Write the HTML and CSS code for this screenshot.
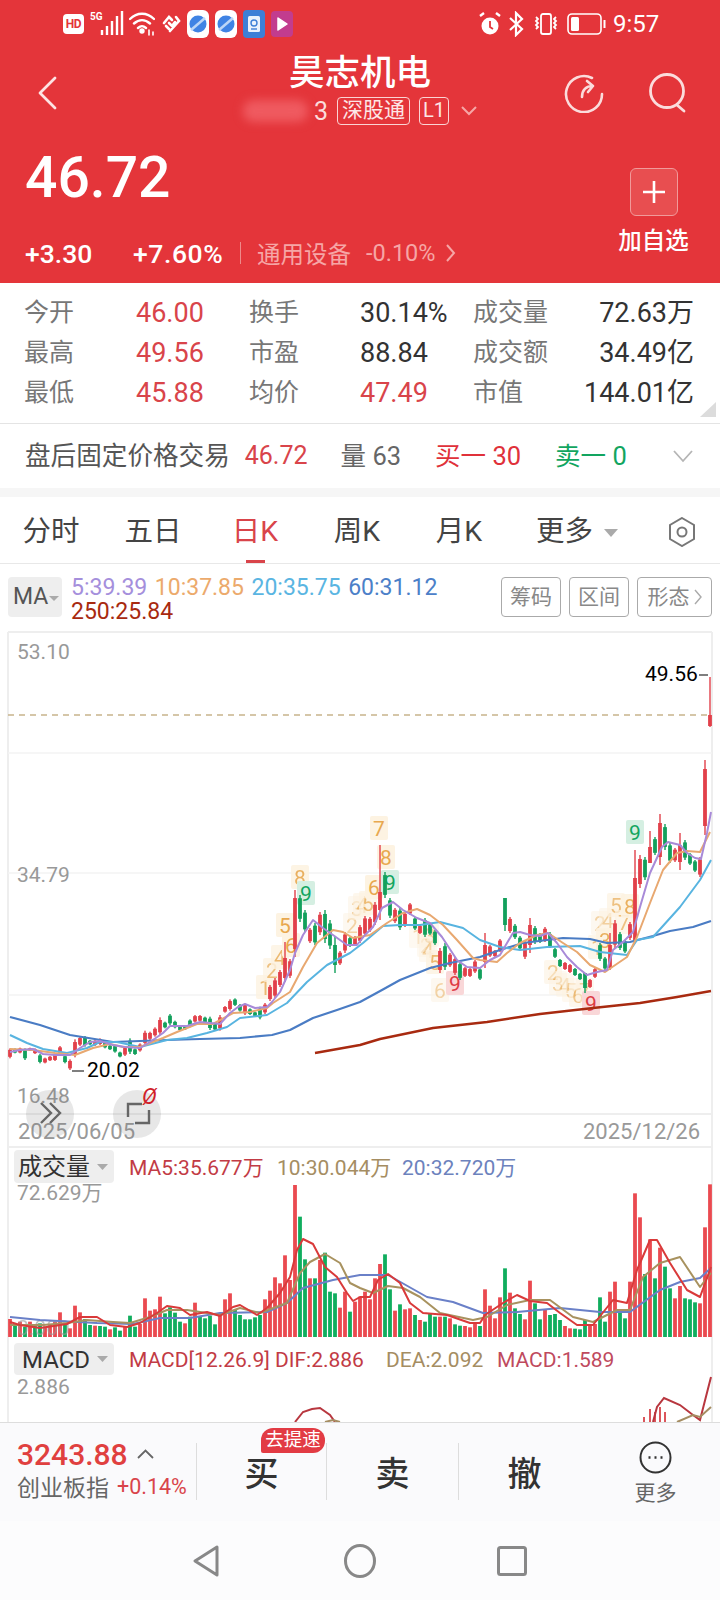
FILE: index.html
```html
<!DOCTYPE html>
<html lang="zh">
<head>
<meta charset="utf-8">
<title>昊志机电</title>
<link rel="stylesheet" href="styles.css">
</head>
<body>
<div class="phone">
  <header class="head">
    <div class="status">
      <div class="st-left">
        <span class="hd">HD</span>
        <svg class="i-signal" width="34" height="26" viewBox="0 0 34 26"><text class="g5" x="0" y="9">5G</text><path d="M13 24v-5M18 24v-9M23 24V10M28 24V5M33 24V0" transform="translate(-1 0)" stroke="#fff" stroke-width="2.4" fill="none"/></svg>
        <svg width="26" height="24" viewBox="0 0 26 24" fill="none" stroke="#fff" stroke-width="2.4" stroke-linecap="round"><path d="M1 7c7-7 17-7 24 0M5 11.500c5-4.500 11-4.500 16 0M9 16c3-2.500 5-2.500 8 0"/><circle cx="13" cy="19" r="1.500" fill="#fff"/><path d="M20 18v5M24 20v3" stroke-width="1.600"/></svg>
        <svg class="i-heart" width="20" height="20" viewBox="0 0 20 20" fill="none" stroke="#fff" stroke-width="2.600" stroke-linecap="round"><path d="M3 9l5-6 3 3M9 17L18 7 15 3M5 12l3 3M8 9l3 3 3-4"/></svg>
        <svg class="app" width="22" height="28" viewBox="0 0 22 28"><rect width="22" height="28" rx="6" fill="#fff"/><circle cx="11" cy="14" r="8.500" fill="#3f83e4"/><path d="M4 20L18 8" stroke="#bcd6f7" stroke-width="2.500"/></svg>
        <svg class="app" width="22" height="28" viewBox="0 0 22 28"><rect width="22" height="28" rx="6" fill="#fff"/><circle cx="11" cy="14" r="8.500" fill="#3f83e4"/><path d="M4 20L18 8" stroke="#bcd6f7" stroke-width="2.500"/></svg>
        <svg class="app" width="22" height="28" viewBox="0 0 22 28"><rect width="22" height="28" rx="4" fill="#3d7fd6"/><rect x="5" y="6" width="12" height="16" rx="1.500" fill="#eaf2fc"/><circle cx="11" cy="13" r="3" fill="none" stroke="#3d7fd6" stroke-width="1.400"/><path d="M8 19h6" stroke="#3d7fd6" stroke-width="1.400"/></svg>
        <svg class="app" width="22" height="26" viewBox="0 0 22 26"><rect width="22" height="26" rx="4" fill="#c23c8e"/><path d="M7 7l9 6-9 6z" fill="#fff" stroke="#fff" stroke-width="1.500" stroke-linejoin="round"/></svg>
      </div>
      <div class="st-right">
        <svg width="22" height="26" viewBox="0 0 22 26"><circle cx="11" cy="15" r="8.500" fill="#fff"/><path d="M11 10v6l3 2" stroke="#e4353a" stroke-width="1.800" fill="none"/><path d="M1 5l4-3M21 5l-4-3" stroke="#fff" stroke-width="2.400"/></svg>
        <svg width="17" height="26" viewBox="0 0 17 26" fill="none" stroke="#fff" stroke-width="2.200"><path d="M2 7l12 11-6 6V2l6 6L2 19"/></svg>
        <svg width="28" height="24" viewBox="0 0 28 24" fill="none" stroke="#fff" stroke-width="1.800"><rect x="9" y="2" width="10" height="20" rx="2"/><path d="M4 5l2 2-2 2 2 2-2 2 2 2-2 2M24 5l-2 2 2 2-2 2 2 2-2 2 2 2"/></svg>
        <svg width="39" height="24" viewBox="0 0 39 24" fill="none"><rect x="1" y="2" width="33" height="20" rx="4" stroke="#fff" stroke-width="1.600"/><rect x="4" y="5" width="8" height="14" rx="1.500" fill="#fff"/><rect x="36.500" y="8" width="2" height="8" fill="#fff"/></svg>
        <span class="clock">9:57</span>
      </div>
    </div>
    <div class="nav">
      <div class="nav-l">
        <svg width="20" height="34" viewBox="0 0 20 34" fill="none" stroke="#fde3e3" stroke-width="2.800" stroke-linecap="round" stroke-linejoin="round"><path d="M17 2L2 17l15 15"/></svg>
      </div>
      <div class="nav-c">
        <div class="name">昊志机电</div>
        <div class="sub">
          <span class="blurcode"></span>
          <span class="code3">3</span>
          <span class="tag">深股通</span>
          <span class="tag tag-l">L1</span>
          <svg width="16" height="10" viewBox="0 0 16 10" fill="none" stroke="#f6a6a6" stroke-width="2"><path d="M1 1l7 7 7-7"/></svg>
        </div>
      </div>
      <div class="nav-r">
        <svg width="40" height="40" viewBox="0 0 40 40" fill="none" stroke="#fbdcdc" stroke-width="2.600" stroke-linecap="round" stroke-linejoin="round"><path d="M28 5A18 18 0 1 0 38 21"/><path d="M18 24c0-7 4-11 11-11M23 8l6 5-5 6"/></svg>
        <svg class="i-search" width="38" height="40" viewBox="0 0 38 40" fill="none" stroke="#fbdcdc" stroke-width="2.800" stroke-linecap="round"><circle cx="18" cy="18" r="16.500"/><path d="M28 32l7 6"/></svg>
      </div>
    </div>
    <div class="quote">
      <div class="q-main">
        <div class="price">46.72</div>
        <div class="chg">
          <span class="chg-a">+3.30</span>
          <span class="chg-b">+7.60%</span>
          <span class="sep"></span>
          <span class="sector">通用设备</span>
          <span class="sector-v">-0.10%</span>
          <svg width="10" height="20" viewBox="0 0 10 20" fill="none" stroke="#f6a6a6" stroke-width="2"><path d="M1 2l7 8-7 8"/></svg>
        </div>
      </div>
      <div class="q-add">
        <div class="addbtn"><svg width="24" height="24" viewBox="0 0 24 24" stroke="#fff" stroke-width="2.600"><path d="M12 1v22M1 12h22"/></svg></div>
        <div class="addtxt">加自选</div>
      </div>
    </div>
  </header>

  <section class="stats">
    <span class="k">今开</span><span class="v red">46.00</span><span class="k">换手</span><span class="v">30.14%</span><span class="k">成交量</span><span class="v right">72.63万</span>
    <span class="k">最高</span><span class="v red">49.56</span><span class="k">市盈</span><span class="v">88.84</span><span class="k">成交额</span><span class="v right">34.49亿</span>
    <span class="k">最低</span><span class="v red">45.88</span><span class="k">均价</span><span class="v red">47.49</span><span class="k">市值</span><span class="v right">144.01亿</span>
    <span class="corner"></span>
  </section>

  <section class="after">
    <div class="af-first"><span class="af-l">盘后固定价格交易</span><span class="af-p">46.72</span></div>
    <span class="af-q">量 63</span>
    <span class="af-b">买一 30</span>
    <span class="af-s">卖一 0</span>
    <svg class="af-c" width="20" height="13" viewBox="0 0 20 13" fill="none" stroke="#b5b5b5" stroke-width="1.800"><path d="M1 1l9 10 9-10"/></svg>
  </section>
  <div class="band"></div>

  <nav class="tabs">
    <span class="tab">分时</span>
    <span class="tab">五日</span>
    <span class="tab on">日K</span>
    <span class="tab">周K</span>
    <span class="tab">月K</span>
    <span class="tab more">更多<i class="tri"></i></span>
    <svg class="hex" width="28" height="30" viewBox="0 0 28 30" fill="none" stroke="#777" stroke-width="2"><path d="M14 1l12 7v14l-12 7-12-7V8z"/><circle cx="14" cy="15" r="4.500"/></svg>
  </nav>

  <div class="mabar">
    <div class="mabox">MA<i class="tri tri-s"></i></div>
    <div class="legend">
      <span class="c5">5:39.39</span><span class="c10">10:37.85</span><span class="c20">20:35.75</span><span class="c60">60:31.12</span><span class="c250">250:25.84</span>
    </div>
    <div class="tools">
      <span class="tool">筹码</span><span class="tool">区间</span><span class="tool tool-w">形态<svg width="8" height="18" viewBox="0 0 8 18" fill="none" stroke="#aaa" stroke-width="1.400"><path d="M1 2l6 7-6 7"/></svg></span>
    </div>
  </div>

  <svg class="chart" width="720" height="794" viewBox="0 628 720 794">
    <g class="frame">
      <path d="M8 632V1422M712 632V1422"/>
      <path d="M8 632H712" class="fr-top"/>
      <path d="M8 753H712M8 873H712M8 995H712" class="grid"/>
      <path d="M8 1114H712M8 1147H712" class="fr-top"/>
    </g>
    <path class="dash" d="M8 715H712"/>
    <text class="ax" x="17" y="659">53.10</text>
    <text class="ax" x="17" y="882">34.79</text>
    <text class="ax" x="17" y="1103">16.48</text>
    <text class="ax ax-d" x="18" y="1139">2025/06/05</text>
    <text class="ax ax-d" x="583" y="1139">2025/12/26</text>
    <g id="td"></g>
    <g id="candles"></g>
    <polyline class="ln l60" points="10,1017 40,1025 70,1035 113,1042 140,1041 167,1040 200,1039 240,1038 272,1035 290,1030 313,1018 337,1010 360,1002 382,990 400,980 430,968 450,963 480,957 500,950 523,943 547,940 563,938 590,939 607,943 630,942 653,936 670,931 693,927 711,921"/>
    <polyline class="ln l250" points="315,1053 360,1045 380,1039 433,1028 487,1022 540,1014 593,1008 640,1003 677,997 711,991"/>
    <polyline class="ln l20" points="10,1035 27,1043 43,1049 67,1053 87,1048 100,1042 117,1042 140,1047 167,1040 187,1038 207,1033 227,1027 240,1018 267,1015 287,1003 307,982 327,965 350,953 363,943 383,926 400,925 420,925 440,922 463,928 480,940 500,947 520,950 547,947 580,946 600,952 627,955 637,940 653,937 680,907 700,880 711,860"/>
    <polyline class="ln l10" points="10,1049 33,1050 55,1053 75,1055 93,1048 110,1044 123,1047 140,1047 163,1038 177,1032 197,1024 213,1024 233,1013 250,1012 267,1008 273,1003 290,992 303,967 317,943 333,930 343,932 353,938 370,935 387,923 403,913 417,909 430,915 443,925 457,940 473,958 480,960 497,962 507,953 520,943 537,935 548,933 563,943 577,952 590,965 605,972 627,957 637,937 650,903 663,870 677,853 687,851 700,852 710,832"/>
    <polyline class="ln l5" points="10,1052 20,1050 33,1049 43,1054 55,1055 70,1055 80,1048 90,1042 100,1041 113,1045 125,1047 140,1048 150,1042 163,1033 170,1026 187,1026 200,1022 220,1024 230,1013 238,1007 245,1004 255,1008 267,1007 272,1002 280,992 290,970 295,953 303,935 313,920 323,928 333,935 347,945 357,945 365,935 373,927 382,908 393,902 403,910 417,918 430,923 442,937 457,960 467,967 480,968 490,960 500,955 507,943 513,933 520,932 530,935 540,936 548,933 557,943 567,957 577,967 587,975 597,972 607,970 613,950 623,942 633,932 640,907 650,873 662,847 668,842 680,845 687,853 695,858 701,859 707,833 711,812"/>
    <text class="hl" x="645" y="681">49.56</text>
    <path class="hl-d" d="M699 675H708"/>
    <text class="hl" x="87" y="1077">20.02</text>
    <path class="hl-d" d="M72 1071H84"/>
    <circle class="fab" cx="50" cy="1114" r="24"/>
    <circle class="fab" cx="137" cy="1114" r="24"/>
    <path class="fab-i" d="M41 1103l10 10-10 10M50 1103l10 10-10 10"/>
    <path class="fab-i" d="M128 1117v-13h14M149 1110v13h-14"/>
    <text class="zero" x="142" y="1104">Ø</text>

    <rect class="pick" x="14" y="1150" width="100" height="33" rx="4"/>
    <text class="pick-t" x="18" y="1175">成交量</text>
    <path class="pick-a" d="M97 1164h11l-5.500 6z"/>
    <text class="lg" x="129" y="1175" fill="#c23b45">MA5:35.677万</text>
    <text class="lg" x="277" y="1175" fill="#a58d62">10:30.044万</text>
    <text class="lg" x="402" y="1175" fill="#6c82bd">20:32.720万</text>
    <text class="ax" x="17" y="1200">72.629万</text>
    <g id="vol"></g>
    <text class="ax ax-o" x="17" y="1335">0.000</text>
    <polyline class="vl v20" points="10,1317 40,1320 97,1323 133,1324 160,1318 190,1318 220,1313 267,1312 287,1303 303,1288 333,1280 360,1275 388,1275 427,1297 453,1302 483,1313 517,1312 560,1308 600,1312 630,1312 660,1290 680,1282 700,1278 711,1268"/>
    <polyline class="vl v10" points="10,1325 43,1325 67,1323 87,1320 113,1322 130,1323 150,1317 167,1310 187,1310 220,1315 240,1308 260,1313 287,1303 300,1273 310,1262 325,1254 340,1263 350,1283 360,1288 373,1293 388,1286 403,1288 420,1297 440,1313 473,1320 487,1317 507,1305 530,1300 550,1300 573,1317 593,1322 617,1310 630,1310 643,1277 660,1263 680,1257 700,1287 711,1273"/>
    <polyline class="vl v5" points="10,1322 20,1325 40,1328 67,1324 80,1317 97,1317 110,1325 127,1327 140,1323 157,1313 167,1306 180,1308 190,1315 207,1312 220,1316 233,1307 240,1305 257,1315 267,1308 280,1293 290,1277 297,1250 303,1239 313,1244 325,1267 337,1277 347,1293 353,1301 360,1297 370,1297 378,1280 388,1274 400,1283 410,1303 423,1313 447,1315 470,1323 480,1323 485,1315 503,1303 517,1295 530,1301 547,1303 560,1313 577,1325 593,1325 613,1300 627,1303 637,1270 650,1240 657,1240 670,1263 687,1290 700,1297 711,1267"/>

    <rect class="pick" x="14" y="1343" width="100" height="32" rx="4"/>
    <text class="pick-t" x="22" y="1368">MACD</text>
    <path class="pick-a" d="M97 1356h11l-5.500 6z"/>
    <text class="lg" x="129" y="1367" fill="#c23b45">MACD[12.26.9] DIF:2.886</text>
    <text class="lg" x="386" y="1367" fill="#a58d62">DEA:2.092</text>
    <text class="lg" x="497" y="1367" fill="#bf4a5e">MACD:1.589</text>
    <text class="ax" x="17" y="1394">2.886</text>
    <path class="mb" d="M644 1422v-5M650 1422v-13M655 1422v-10M660 1422v-15M665 1422v-10"/>
    <polyline class="ml" points="295,1422 303,1412 312,1409 320,1408 330,1415 335,1422"/>
    <polyline class="mt" points="325,1422 333,1420 340,1422"/>
    <polyline class="ml" points="653,1422 657,1407 664,1398 680,1405 693,1415 700,1420 711,1377"/>
    <polyline class="mt" points="677,1422 693,1415 700,1417 711,1407"/>
  </svg>

  <footer class="trade">
    <div class="idx">
      <div class="idx-top"><span class="idx-v">3243.88</span><svg width="17" height="10" viewBox="0 0 17 10" fill="none" stroke="#666" stroke-width="1.800"><path d="M1 9l7.500-7.500L16 9"/></svg></div>
      <div class="idx-bot"><span class="idx-n">创业板指</span><span class="idx-p">+0.14%</span></div>
    </div>
    <div class="act"><span>买</span><em class="badge">去提速</em></div>
    <div class="act"><span>卖</span></div>
    <div class="act"><span>撤</span></div>
    <div class="act act-more">
      <svg width="33" height="33" viewBox="0 0 33 33" fill="none" stroke="#333" stroke-width="2"><circle cx="16.500" cy="16.500" r="15"/><path d="M9.500 16.500h2M15.500 16.500h2M21.500 16.500h2" stroke-width="2.400"/></svg>
      <b>更多</b>
    </div>
  </footer>
  <div class="sysnav">
    <svg width="26" height="32" viewBox="0 0 26 32" fill="none" stroke="#888" stroke-width="3" stroke-linejoin="round"><path d="M24 2v28L2 16z"/></svg>
    <svg width="32" height="34" viewBox="0 0 32 34" fill="none" stroke="#888" stroke-width="3"><ellipse cx="16" cy="17" rx="14.500" ry="15.500"/></svg>
    <svg width="30" height="30" viewBox="0 0 30 30" fill="none" stroke="#888" stroke-width="3"><rect x="1.500" y="1.500" width="27" height="27" rx="2"/></svg>
  </div>
</div>
<script src="chart.js"></script>
</body>
</html>
```

FILE: styles.css
```css
* { box-sizing: border-box; }
html, body { margin: 0; padding: 0; background: #fff; }
body { font-family: Roboto, "Noto Sans CJK SC", sans-serif; color: #333; }
.phone { width: 720px; height: 1600px; overflow: hidden; display: flex; flex-direction: column; }

.head { height: 283px; flex: none; background: #e4353a; color: #fff; display: flex; flex-direction: column; }
.status { height: 48px; display: flex; justify-content: space-between; align-items: center; padding: 0 63px; }
.st-left, .st-right { display: flex; align-items: center; }
.st-left { gap: 6px; }
.st-right { gap: 7px; }
.hd { width: 21px; height: 20px; border-radius: 4px; background: #fff; color: #e4353a; font-size: 12px; font-weight: 700; line-height: 20px; text-align: center; letter-spacing: -0.5px; }
.g5 { font: 700 10px Roboto, sans-serif; fill: #fff; }
.i-signal { margin-right: -1px; }
.clock { font-size: 24px; line-height: 30px; width: 44px; white-space: nowrap; }

.nav { height: 84px; display: flex; }
.nav-l { width: 200px; padding: 28px 0 0 38px; }
.nav-c { flex: 1; display: flex; flex-direction: column; align-items: center; }
.nav-r { width: 200px; display: flex; justify-content: flex-end; gap: 45px; padding: 25px 33px 0 0; }
.name { margin-top: 5px; font-size: 35.500px; line-height: 40px; font-weight: 500; white-space: nowrap; }
.sub { margin-top: 3px; height: 30px; display: flex; align-items: center; }
.blurcode { width: 65px; height: 22px; margin-right: 6px; border-radius: 10px; background: #ef5a60; filter: blur(5px); }
.code3 { width: 14px; font-size: 25px; margin-right: 9px; color: #fbdcdc; }
.tag { height: 28px; line-height: 25px; padding: 0 4px; border: 1px solid #fbd4d4; border-radius: 4px; font-size: 21px; color: #fde6e6; margin-right: 9px; white-space: nowrap; }
.tag-l { width: 30px; padding: 0; text-align: center; font-size: 20px; margin-right: 12px; }
.quote { flex: 1; display: flex; justify-content: space-between; padding: 0 31px 0 25px; }
.q-main { padding-top: 12px; }
.price { font-size: 57px; line-height: 68px; font-weight: 500; }
.chg { margin-top: 21px; height: 40px; display: flex; align-items: center; font-size: 26.500px; font-weight: 500; white-space: nowrap; }
.chg-a { width: 108px; }
.chg-b { width: 107px; letter-spacing: .6px; }
.sep { width: 1px; height: 22px; background: #ee8a8a; margin-right: 16px; }
.sector { font-size: 23.500px; font-weight: 400; color: #f6a6a6; }
.sector-v { font-size: 23.500px; font-weight: 400; color: #f6a6a6; margin: 0 10px 0 15px; }
.q-add { width: 71px; display: flex; flex-direction: column; align-items: center; padding-top: 36px; }
.addbtn { width: 48px; height: 48px; border-radius: 6px; border: 1px solid #f19a9a; background: #e84e50; display: flex; align-items: center; justify-content: center; }
.addtxt { margin-top: 10px; font-size: 23.500px; line-height: 30px; font-weight: 500; white-space: nowrap; }

.stats { position: relative; height: 141px; flex: none; padding: 10px 0 0 24px; display: grid; grid-template-columns: 112px 113px 111px 113px 100px 121px; grid-auto-rows: 40px; align-items: center; line-height: 36px; border-bottom: 1px solid #e4e4e4; white-space: nowrap; }
.k { font-size: 25px; color: #777; }
.v { font-size: 27px; color: #333; }
.v.red { color: #d9444a; }
.v.right { text-align: right; }
.corner { position: absolute; right: 4px; bottom: 6px; width: 16px; height: 15px; background: #dcdcdc; clip-path: polygon(100% 0, 100% 100%, 0 100%); }

.after { height: 64px; flex: none; display: flex; align-items: center; gap: 34px; padding: 0 27px 0 25px; font-size: 25.500px; line-height: 36px; white-space: nowrap; }
.af-first { display: flex; align-items: center; gap: 15px; margin-right: -1px; }
.af-l { font-size: 25.600px; color: #555; }
.af-p { font-size: 25px; color: #d9444a; }
.af-q { color: #666; }
.af-b { color: #e0313a; }
.af-s { color: #12a560; }
.af-c { margin-left: auto; }
.band { height: 9px; flex: none; background: #f6f6f6; }

.tabs { position: relative; height: 67px; flex: none; display: flex; align-items: center; padding-top: 3px; border-bottom: 1px solid #e8e8e8; }
.tab { width: 102px; text-align: center; font-size: 28.500px; line-height: 40px; color: #444; white-space: nowrap; }
.tab.on { color: #d9444a; position: relative; }
.tab.on::after { content: ""; position: absolute; left: 42px; bottom: -11px; width: 19px; height: 3px; background: #d9444a; }
.tab.more { position: relative; text-align: left; padding-left: 26px; width: 128px; }
.tri { display: inline-block; margin-left: 11px; vertical-align: 4px; border-left: 7px solid transparent; border-right: 7px solid transparent; border-top: 8px solid #aaa; }
.hex { margin-left: 30px; }
.mabar { height: 64px; flex: none; display: flex; padding: 11px 8px 0; }
.mabox { width: 54px; height: 40px; margin-top: 2px; background: #eee; border-radius: 4px; font-size: 23px; line-height: 40px; padding-left: 5px; color: #555; white-space: nowrap; }
.tri-s { margin-left: 1px; border-left-width: 5px; border-right-width: 5px; border-top-width: 5px; vertical-align: 3px; }
.legend { width: 400px; margin: 1px 0 0 9px; display: flex; flex-wrap: wrap; column-gap: 7.500px; font-size: 23px; line-height: 24px; white-space: nowrap; align-content: flex-start; }
.c5 { color: #a58fdc; } .c10 { color: #ecaa6c; } .c20 { color: #5ab5e2; } .c60 { color: #4c80c8; } .c250 { color: #a82a10; }
.tools { margin-left: auto; margin-top: 2px; display: flex; gap: 8px; }
.tool { width: 60px; height: 40px; border: 1px solid #aaa; border-radius: 4px; font-size: 21px; line-height: 38px; text-align: center; color: #888; white-space: nowrap; }
.tool-w { width: 75px; display: flex; justify-content: center; align-items: center; gap: 4px; }

.chart { display: block; flex: none; }
.frame path { fill: none; stroke: #eee; stroke-width: 2; }
.frame .grid { stroke: #f3f3f3; stroke-width: 1.500; }
.dash { stroke: #c8b48c; stroke-width: 1.500; stroke-dasharray: 6 5; fill: none; }
.ax { font: 21px Roboto, "Noto Sans CJK SC", sans-serif; fill: #999; }
.ax-d { font-size: 22px; }
.ax-o { opacity: .6; }
.hl { font: 21px Roboto, sans-serif; fill: #000; }
.hl-d { stroke: #555; stroke-width: 1.500; fill: none; }
.ln { fill: none; stroke-linejoin: round; }
.l5 { stroke: #a88ad8; stroke-width: 2; }
.l10 { stroke: #e8a870; stroke-width: 2; }
.l20 { stroke: #58b4e0; stroke-width: 2; }
.l60 { stroke: #4a7cc4; stroke-width: 2.200; }
.l250 { stroke: #a82a10; stroke-width: 2.400; }
.fab { fill: rgba(110, 110, 110, .17); }
.fab-i { fill: none; stroke: #666; stroke-width: 2.400; }
.zero { font: italic 22px Roboto, sans-serif; fill: #d11f2a; }
.pick { fill: #eee; }
.pick-t { font: 24px Roboto, "Noto Sans CJK SC", sans-serif; fill: #333; }
.pick-a { fill: #aaa; }
.lg { font: 21px Roboto, "Noto Sans CJK SC", sans-serif; }
.vl { fill: none; stroke-linejoin: round; stroke-width: 2; }
.v5 { stroke: #d93a3a; } .v10 { stroke: #a8925f; } .v20 { stroke: #6a80c8; }
.mb { stroke: #d9444a; stroke-width: 1.800; fill: none; }
.ml { fill: none; stroke: #b8373f; stroke-width: 2; }
.mt { fill: none; stroke: #a58d62; stroke-width: 2; }
.td-b { fill: #fdf3e2; }
.td-g { fill: #d5efe2; }
.td-r { fill: #f9d7d8; }
.td-t { font: 21px Roboto, sans-serif; text-anchor: middle; fill: #e8a84e; }
.td-tg { fill: #12a560; }
.td-tr { fill: #de3b44; }

.trade { height: 99px; flex: none; background: #fafafc; border-top: 1px solid #ddd; display: grid; grid-template-columns: 196px 130px 132px 132px 130px; position: relative; z-index: 1; }
.idx { padding: 15px 0 0 17px; white-space: nowrap; }
.idx-top { height: 32px; display: flex; align-items: center; gap: 9px; }
.idx-v { font-size: 30px; font-weight: 500; color: #e0403f; }
.idx-bot { height: 32px; display: flex; align-items: center; gap: 8px; }
.idx-n { font-size: 23px; color: #666; }
.idx-p { font-size: 21.500px; color: #d9444a; }
.act { position: relative; margin-top: 20px; height: 57px; border-left: 1px solid #ddd; display: flex; align-items: center; justify-content: center; font-size: 34px; color: #333; font-weight: 500; }
.badge { position: absolute; left: 64px; top: -15px; width: 64px; height: 25px; border-radius: 12px 12px 12px 2px; background: #e23b44; color: #fff; font-size: 18.500px; font-style: normal; font-weight: 400; line-height: 25px; text-align: center; white-space: nowrap; }
.act-more { flex-direction: column; justify-content: flex-start; margin-top: 18px; height: 72px; border-left-color: transparent; }
.act-more svg { flex: none; }
.act-more b { font-size: 21px; font-weight: 400; color: #666; line-height: 26px; margin-top: 6px; white-space: nowrap; }
.sysnav { flex: 1; background: #fcfcfd; display: flex; align-items: center; padding-left: 193px; gap: 125px; }
.sysnav svg:last-child { margin-left: -4px; }
```

FILE: chart.js
```js
// Daily candles, volume bars and TD-sequence marks for the K-line chart.
(function () {
  var NS = 'http://www.w3.org/2000/svg';
  var RED = '#e2404a', GREEN = '#12a05c', VRED = '#ea4a50', VGREEN = '#10ad5e';
  function el(parent, tag, attrs, text) {
    var n = document.createElementNS(NS, tag);
    for (var k in attrs) n.setAttribute(k, attrs[k]);
    if (text) n.textContent = text;
    parent.appendChild(n);
    return n;
  }
  function xOf(i) { return 10 + i * 5; }

  // first 52 sessions: offsets above y=980 at 3x
  var early = 'r205-235 g205-220 r203-220 g205-240 r203-213 r205-222 g222-250 r233-250 r228-243 r222-243 r198-225 g225-250 r238-270 r178-232 r170-198 g168-200 g180-195 r180-198 r175-195 g185-205 g195-210 g195-218 g215-232 r200-228 g175-222 g205-225 r190-215 r152-195 r155-180 r142-170 r112-165 g125-145 g102-135 g122-145 g138-152 g135-150 g118-142 r105-128 r105-125 g110-130 g110-150 g128-152 r105-152 r78-98 r58-92 g55-78 g72-95 r70-105 g85-105 g95-110 g80-118 r69-102'.split(' ');
  // remaining sessions: page y, high-low[:bodyTop-bodyBottom]
  var late = 'r985-1001 r978-998 r970-987 r942-982:958-978 r959-978 r890-957 g895-922 g910-932 r928-943 g923-945 r912-935 g910-943 g920-949 g937-973:945-965 r951-965 r932-953 g937-947 r936-946 r925-943 r916-936 r917-932 r902-925 r845-920:892-910 g872-898 g898-918 r908-923 g908-930 r912-927 r903-915 g917-930 r925-934 g918-937 g923-935 g930-945 r948-973 g943-970 r953-967 r957-975 g962-980 r967-977 r968-977 r960-973 g968-980 r933-968:945-962 r945-957 r950-957 r939-952 g898-931:898-925 r917-933 g924-939 g936-950 r940-959 r918-953:925-945 g926-944 g933-943 r927-942 g932-948 g948-958 g959-967 r962-970 r964-973 g968-976 g973-980 g973-993:973-988 r979-988 r968-978 g943-961 g957-970 r933-970:945-968 r920-948 g932-950 g940-953 r922-940 r850-940:878-940 r855-888 g857-880 r831-863:847-863 g837-855 r814-865:823-857 g824-850 g843-863 r848-862 r833-870:845-862 g840-860 g853-865 g860-872 r857-877 r760-835 r677-727:715-726'.split(' ');

  var g = document.getElementById('candles');
  function candle(i, c, hi, lo, bt, bb) {
    var x = xOf(i), col = c === 'r' ? RED : GREEN;
    el(g, 'rect', { x: x - 0.7, y: hi, width: 1.4, height: lo - hi, fill: col });
    el(g, 'rect', { x: x - 1.9, y: bt, width: 3.8, height: Math.max(bb - bt, 1), fill: col });
  }
  early.forEach(function (s, i) {
    var p = s.slice(1).split('-');
    var hi = 980 + p[0] / 3, lo = 980 + p[1] / 3, m = (lo - hi) * 0.15;
    candle(i, s[0], hi, lo, hi + m, lo - m);
  });
  late.forEach(function (s, n) {
    var parts = s.slice(1).split(':'), p = parts[0].split('-');
    var hi = +p[0], lo = +p[1], bt = hi + (lo - hi) * 0.12, bb = lo - (lo - hi) * 0.12;
    if (parts[1]) { var b = parts[1].split('-'); bt = +b[0]; bb = +b[1]; }
    candle(52 + n, s[0], hi, lo, bt, bb);
  });

  // volume bar tops at 3x above y=1140, base at y=1337
  var vols = 'r537 g557 r545 g560 r545 g555 g550 r560 r555 r545 r517 g555 r565 r497 r517 g537 g555 r557 g558 g560 r568 g562 g572 r558 g527 g560 r552 r475 r512 r508 r470 g520 g502 g518 g545 r550 g530 r488 g530 g535 g527 g553 r522 r478 r460 g510 g525 g538 g538 g532 g525 r478 r452 r412 r430 r346 r420 r135 g230 g358 r415 g415 r360 g338 g455 g460 r503 r455 g515 r485 r470 r455 r478 r415 r372 g343 g448 r512 g493 r508 r505 g525 r540 g545 g520 g530 r530 g530 r535 g553 g557 r558 r562 r550 g558 r448 r497 r535 r472 g385 r458 g505 g522 r538 r422 g490 g538 r508 g525 g522 g540 r558 r565 g566 g568 g540 r555 r552 g472 g545 r455 r425 g510 g535 r425 r160 r232 g402 r298 g415 r323 g380 g445 r475 r438 g475 g478 g487 r490 r262 r133'.split(' ');
  var v = document.getElementById('vol');
  vols.forEach(function (s, i) {
    var top = 1140 + s.slice(1) / 3;
    el(v, 'rect', { x: xOf(i) - 1.9, y: top, width: 3.8, height: 1337 - top, fill: s[0] === 'r' ? VRED : VGREEN });
  });

  // TD sequence marks: x, y, digit, kind, opacity
  var marks = [
    [265,987,'1','b',.8],[272,970,'2','b',.7],[280,957,'4','b',.8],[285,925,'5','b',1],[291,945,'6','b',1],[300,877,'8','b',.9],[306,893,'9','g',1],
    [352,925,'2','b',.5],[357,908,'3','b',.5],[362,905,'4','b',.6],[368,903,'5','b',.7],[374,887,'6','b',1],[379,828,'7','b',1],[386,857,'8','b',1],[390,882,'9','g',1],
    [418,936,'1','b',.45],[426,945,'2','b',.45],[430,935,'3','b',.5],[428,950,'4','b',.45],[435,962,'5','b',.8],[440,990,'6','b',.5],[455,983,'9','r',1],
    [553,972,'2','b',.6],[558,983,'3','b',.5],[565,985,'4','b',.45],[571,990,'5','b',.45],[578,995,'6','b',.6],[585,990,'7','b',.5],[591,1003,'9','r',1],
    [597,947,'1','b',.7],[600,923,'2','b',.5],[605,940,'3','b',.9],[608,920,'4','b',.5],[616,905,'5','b',.7],[624,922,'7','b',.7],[630,906,'8','b',.9],[635,832,'9','g',1]
  ];
  var t = document.getElementById('td');
  marks.forEach(function (m) {
    var gp = el(t, 'g', { opacity: m[4] });
    el(gp, 'rect', { x: m[0] - 9, y: m[1] - 12, width: 18, height: 24, rx: 2, 'class': 'td-' + m[3] });
    var cls = 'td-t' + (m[3] === 'b' ? '' : ' td-t' + m[3]);
    el(gp, 'text', { x: m[0], y: m[1] + 8, 'class': cls }, m[2]);
  });
})();
```
